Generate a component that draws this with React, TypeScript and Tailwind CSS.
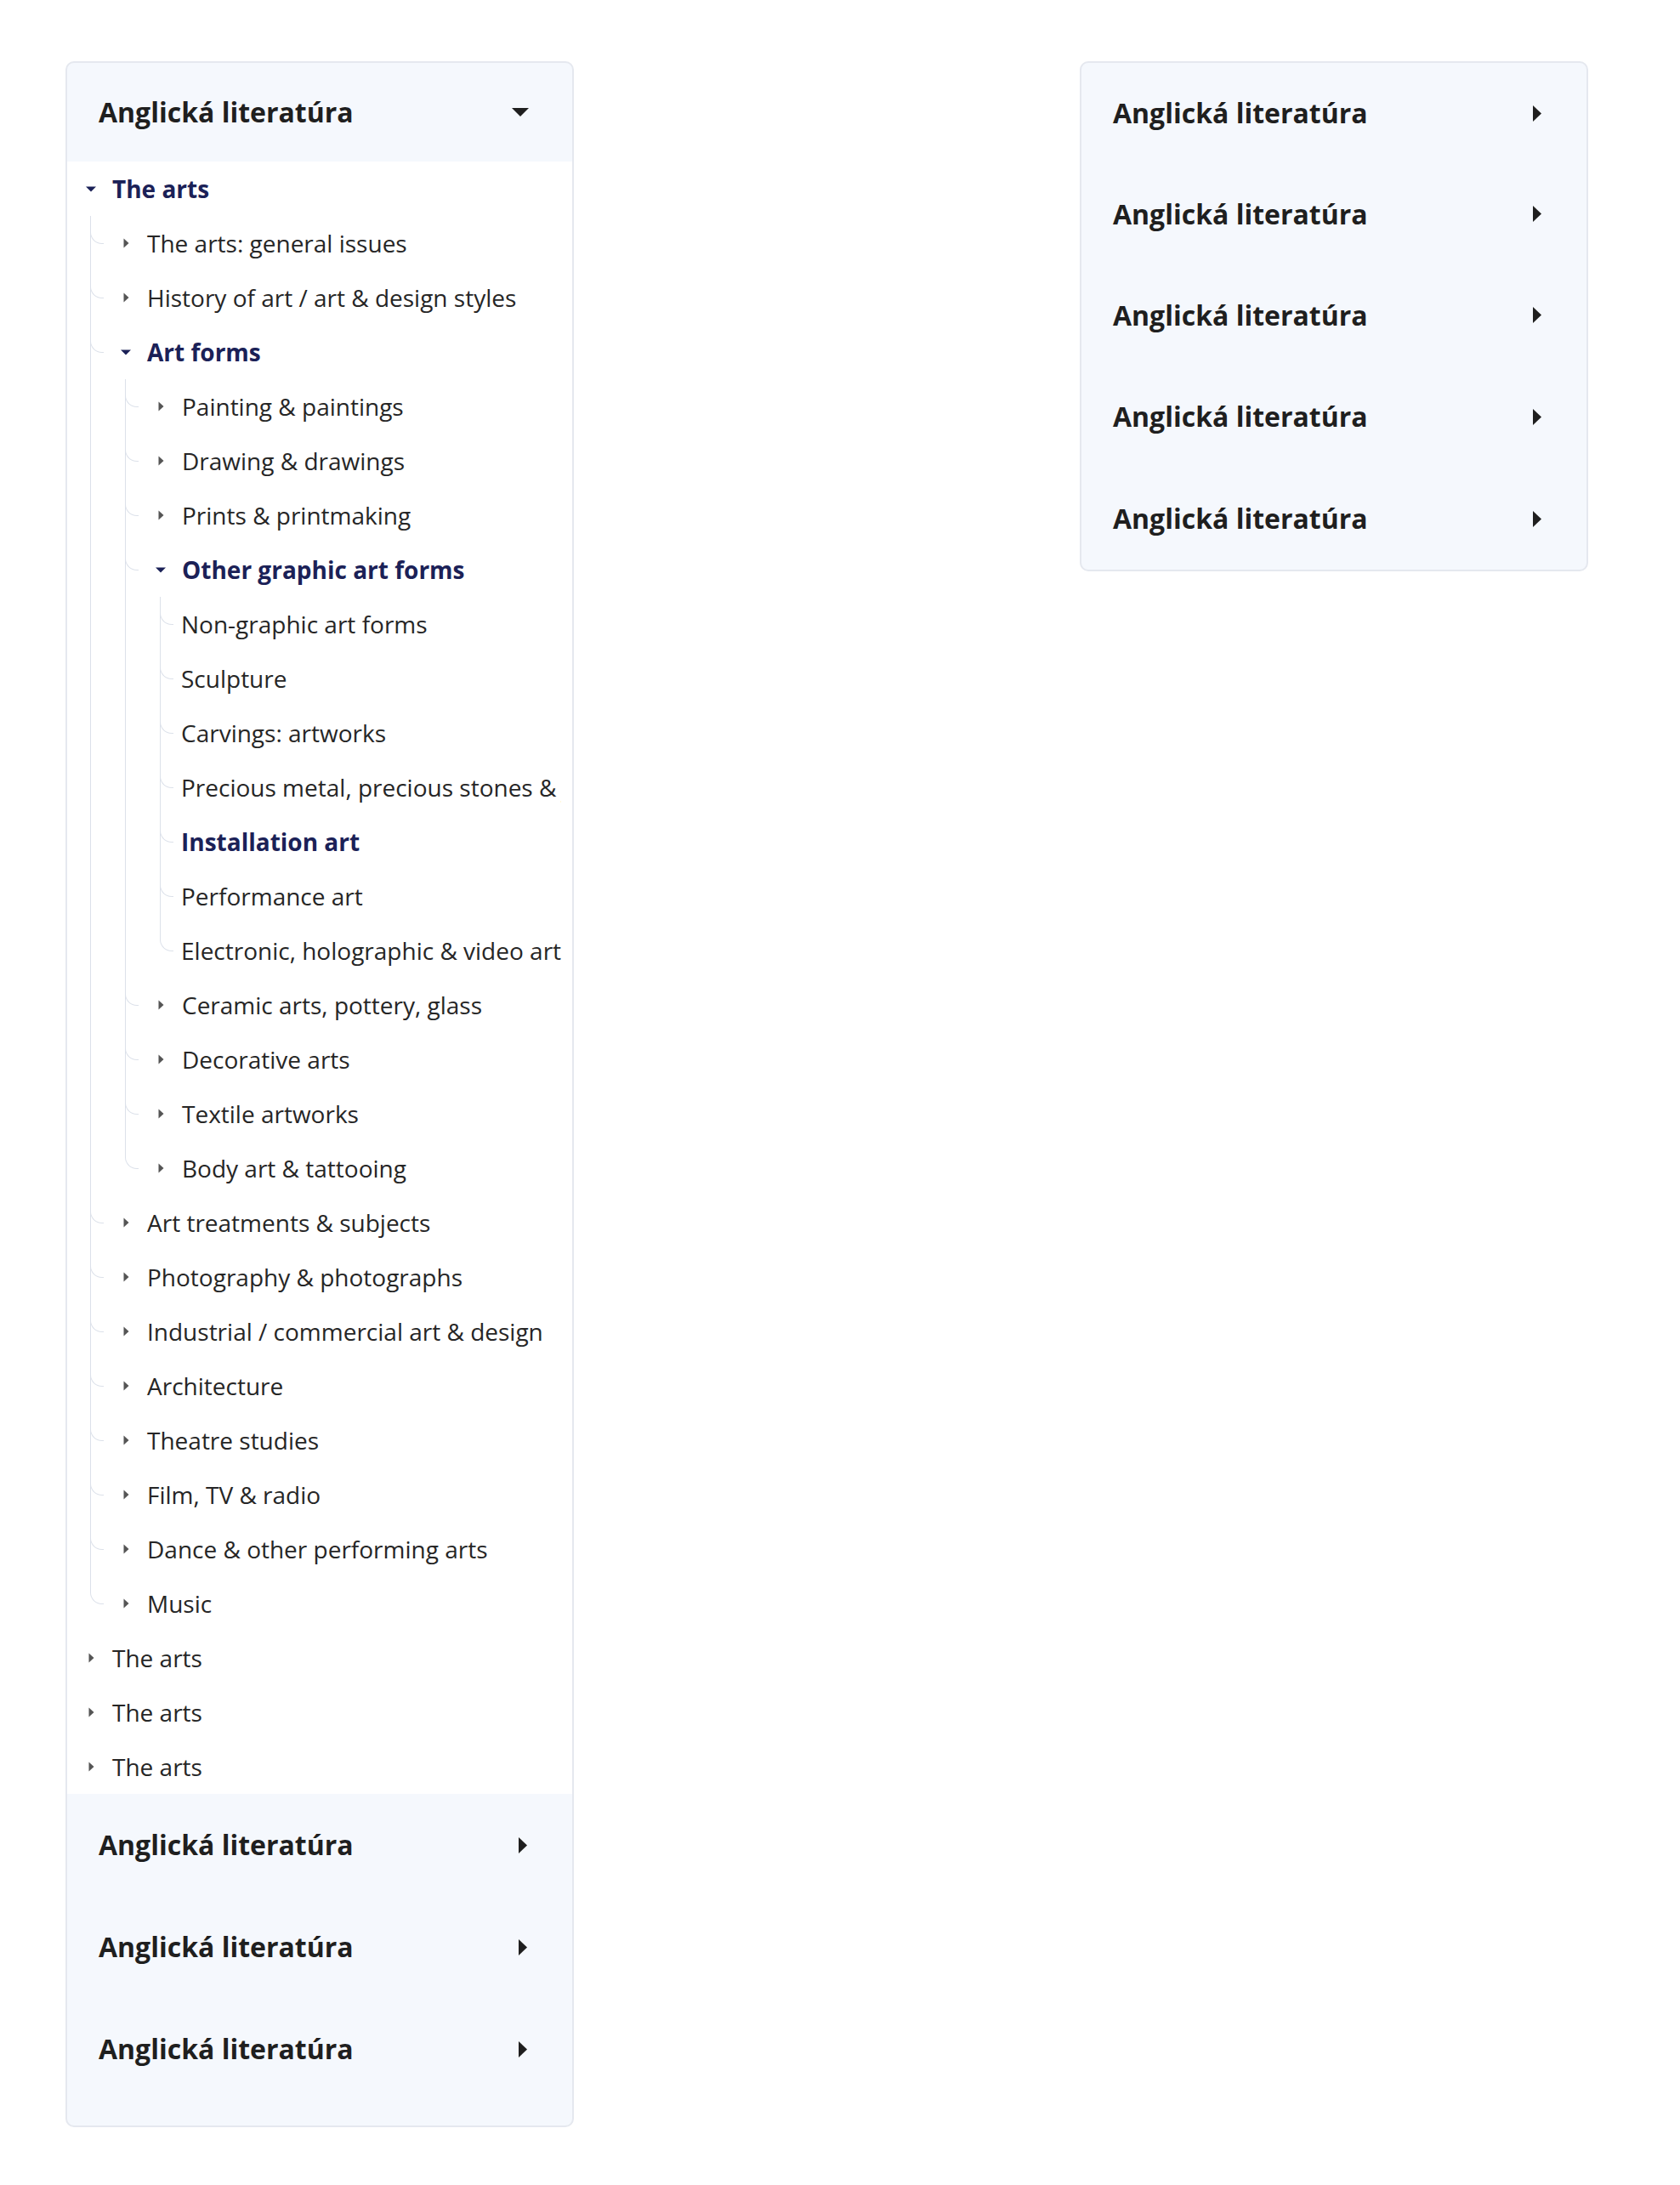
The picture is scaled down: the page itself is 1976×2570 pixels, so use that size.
import React from 'react';

type TreeNode = {
  label: string;
  open?: boolean;
  active?: boolean;
  leaf?: boolean;
  children?: TreeNode[];
};

const leaf = (label: string, active = false): TreeNode => ({ label, leaf: true, active });
const closed = (label: string): TreeNode => ({ label });

const tree: TreeNode[] = [
  {
    label: 'The arts',
    open: true,
    active: true,
    children: [
      closed('The arts: general issues'),
      closed('History of art / art & design styles'),
      {
        label: 'Art forms',
        open: true,
        active: true,
        children: [
          closed('Painting & paintings'),
          closed('Drawing & drawings'),
          closed('Prints & printmaking'),
          {
            label: 'Other graphic art forms',
            open: true,
            active: true,
            children: [
              leaf('Non-graphic art forms'),
              leaf('Sculpture'),
              leaf('Carvings: artworks'),
              leaf('Precious metal, precious stones & jewellery'),
              leaf('Installation art', true),
              leaf('Performance art'),
              leaf('Electronic, holographic & video art'),
            ],
          },
          closed('Ceramic arts, pottery, glass'),
          closed('Decorative arts'),
          closed('Textile artworks'),
          closed('Body art & tattooing'),
        ],
      },
      closed('Art treatments & subjects'),
      closed('Photography & photographs'),
      closed('Industrial / commercial art & design'),
      closed('Architecture'),
      closed('Theatre studies'),
      closed('Film, TV & radio'),
      closed('Dance & other performing arts'),
      closed('Music'),
    ],
  },
  closed('The arts'),
  closed('The arts'),
  closed('The arts'),
];

const SmallDown = () => (
  <svg width="12" height="7" viewBox="0 0 12 7" className="text-[#1b2157]">
    <path d="M0 0.5h12L6 6.5z" fill="currentColor" />
  </svg>
);

const SmallRight = () => (
  <svg width="7" height="12" viewBox="0 0 7 12" className="text-[#555]">
    <path d="M0.5 0.5L6.5 6L0.5 11.5z" fill="currentColor" />
  </svg>
);

const BigDown = () => (
  <svg width="20" height="10" viewBox="0 0 20 10" className="text-[#1f1f1f]">
    <path d="M0 0h20L10 10z" fill="currentColor" />
  </svg>
);

const BigRight = () => (
  <svg width="10" height="19" viewBox="0 0 10 19" className="text-[#1f1f1f]">
    <path d="M0 0l10 9.5L0 19z" fill="currentColor" />
  </svg>
);

const Row = ({ node }: { node: TreeNode }) => (
  <div className="h-[64px] flex items-center overflow-hidden whitespace-nowrap">
    {!node.leaf && (
      <span className="w-[12px] shrink-0 flex justify-center mr-[19px]">
        {node.open ? <SmallDown /> : <SmallRight />}
      </span>
    )}
    <span className={node.active ? 'font-bold text-[#1b2157]' : 'text-[#262626]'}>{node.label}</span>
  </div>
);

const Branch = ({ nodes }: { nodes: TreeNode[] }) => (
  <div className="ml-[5px]">
    {nodes.map((n, i) => {
      const last = i === nodes.length - 1;
      return (
        <div key={i} className="flex">
          <div className={`w-[16px] shrink-0 ${last ? '' : 'border-l border-[#dce1ea]'}`}>
            <div
              className={`h-[33px] w-[16px] border-l border-b border-[#dce1ea] rounded-bl-[14px] ${last ? '' : '-ml-px'}`}
            />
          </div>
          <div className={`flex-1 min-w-0 ${n.leaf ? 'pl-[9px]' : 'pl-[20px]'}`}>
            <Node node={n} />
          </div>
        </div>
      );
    })}
  </div>
);

const Node = ({ node }: { node: TreeNode }) => (
  <div>
    <Row node={node} />
    {node.open && node.children && <Branch nodes={node.children} />}
  </div>
);

const Header = ({ open, h }: { open?: boolean; h: string }) => (
  <div className={`${h} flex items-center justify-between pl-[37px] pr-[51px]`}>
    <span className="text-[32px] font-bold text-[#1f1f1f] leading-none">Anglická literatúra</span>
    <span className={`w-[20px] flex ${open ? 'justify-center' : 'justify-end pr-[2px]'}`}>
      {open ? <BigDown /> : <BigRight />}
    </span>
  </div>
);

export default function App() {
  return (
    <div className="min-h-screen bg-white font-['Open_Sans',sans-serif] flex items-start pl-[77px] pt-[72px] gap-[595px]">
      <div className="w-[598px] shrink-0 border-2 border-[#e5e8ef] rounded-[10px] bg-[#f5f8fd] overflow-hidden pb-[30px]">
        <Header open h="h-[116px]" />
        <div className="bg-white pl-[22px] pr-[13px] text-[28px]">
          {tree.map((n, i) => (
            <Node key={i} node={n} />
          ))}
        </div>
        <Header h="h-[120px]" />
        <Header h="h-[120px]" />
        <Header h="h-[120px]" />
      </div>
      <div className="w-[598px] shrink-0 border-2 border-[#e5e8ef] rounded-[10px] bg-[#f5f8fd] overflow-hidden">
        <Header h="h-[118px]" />
        <Header h="h-[119px]" />
        <Header h="h-[119px]" />
        <Header h="h-[120px]" />
        <Header h="h-[120px]" />
      </div>
    </div>
  );
}
